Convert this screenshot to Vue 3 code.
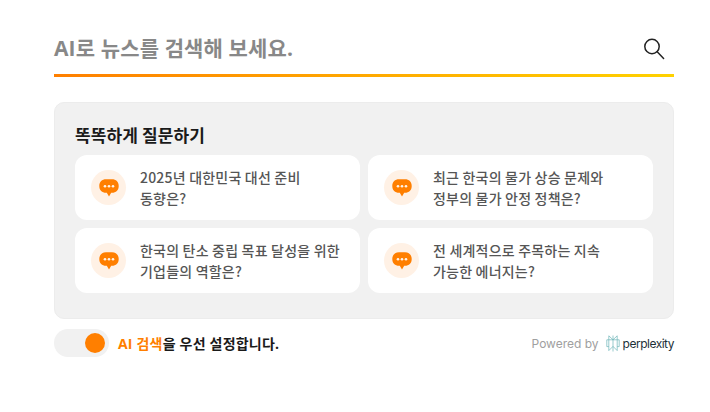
<script setup>
const questions = [
  ['2025년 대한민국 대선 준비', '동향은?'],
  ['최근 한국의 물가 상승 문제와', '정부의 물가 안정 정책은?'],
  ['한국의 탄소 중립 목표 달성을 위한', '기업들의 역할은?'],
  ['전 세계적으로 주목하는 지속', '가능한 에너지는?'],
]
</script>

<template>
  <main class="page">
    <div class="search">
      <span class="placeholder">AI로 뉴스를 검색해 보세요.</span>
      <svg class="search-icon" width="24" height="24" viewBox="0 0 24 24" fill="none" stroke="#222" stroke-width="1.5">
        <circle cx="10" cy="9.5" r="7.2" />
        <path d="M15.2 14.8 L21.6 21.4" stroke-linecap="round" />
      </svg>
    </div>
    <section class="panel">
      <h2 class="title">똑똑하게 질문하기</h2>
      <div class="grid">
        <button v-for="(q, i) in questions" :key="i" class="card">
          <span class="badge">
            <svg width="20" height="19" viewBox="0 0 20 19">
              <path d="M7 0.3 H13 C17 0.3 19.7 2.8 19.7 7 C19.7 11.4 17 13.8 13 13.8 H12.2 L10 17.6 L7.8 13.8 H7 C3 13.8 0.3 11.4 0.3 7 C0.3 2.8 3 0.3 7 0.3 Z" fill="#ff7f00" />
              <circle cx="6" cy="7.2" r="1.3" fill="#fff3e8" />
              <circle cx="10" cy="7.2" r="1.3" fill="#fff3e8" />
              <circle cx="14" cy="7.2" r="1.3" fill="#fff3e8" />
            </svg>
          </span>
          <span class="q">{{ q[0] }}<br />{{ q[1] }}</span>
        </button>
      </div>
    </section>
    <footer class="foot">
      <div class="toggle-row">
        <span class="toggle"><span class="knob"></span></span>
        <span class="label"><em>AI 검색</em>을 우선 설정합니다.</span>
      </div>
      <div class="powered">
        <span class="by">Powered by</span>
        <svg width="14" height="17" viewBox="0 0 14 17" fill="none" stroke="#6db5b7" stroke-width="0.7">
          <path d="M7 0.5 V16.5 M0.8 4.8 V11.6 L2.8 11.6 M13.2 4.8 V11.6 L11.2 11.6 M0.8 4.8 H13.2 M7 4.8 L2.8 0.8 V4.8 M7 4.8 L11.2 0.8 V4.8 M2.8 4.8 V15.6 L7 11.4 L11.2 15.6 V4.8" />
        </svg>
        <span class="logo">perplexity</span>
      </div>
    </footer>
  </main>
</template>

<style scoped>
.page {
  width: 620px;
  margin-left: 54px;
  padding-top: 20px;
  font-family: "Noto Sans CJK KR", "Noto Sans", sans-serif;
  box-sizing: border-box;
}
.search {
  height: 54px;
  border-bottom: 3px solid transparent;
  border-image: linear-gradient(90deg, #ff7f00, #ffd200) 1;
  display: flex;
  align-items: center;
  justify-content: space-between;
  box-sizing: content-box;
}
.placeholder {
  font-family: "Open Sans", "Noto Sans CJK KR", sans-serif;
  font-size: 21px;
  font-weight: 700;
  letter-spacing: 0.13px;
  color: #888;
}
.search-icon {
  margin-right: 8px;
  position: relative;
  top: 2px;
}
.panel {
  margin-top: 25px;
  height: 217px;
  box-sizing: border-box;
  background: #f1f1f1;
  border: 1px solid #ececec;
  border-radius: 10px;
  padding: 20px;
}
.title {
  margin: 0;
  font-size: 17px;
  line-height: 26px;
  font-weight: 700;
  letter-spacing: 0.1px;
  color: #1a1a1a;
  position: relative;
  top: -1px;
}
.grid {
  margin-top: 6px;
  display: grid;
  grid-template-columns: 285px 285px;
  grid-auto-rows: 65px;
  gap: 8px;
}
.card {
  display: flex;
  align-items: center;
  gap: 14px;
  padding: 0 16px;
  border: 0;
  border-radius: 12px;
  background: #fff;
  text-align: left;
  font: inherit;
}
.badge {
  flex: none;
  width: 35px;
  height: 35px;
  border-radius: 50%;
  background: #fff1e5;
  display: flex;
  align-items: center;
  justify-content: center;
}
.badge svg {
  position: relative;
  top: 1px;
}
.q {
  font-size: 14px;
  line-height: 21px;
  letter-spacing: 0.2px;
  font-weight: 500;
  color: #555;
}
.foot {
  margin-top: 10px;
  height: 28px;
  display: flex;
  justify-content: space-between;
  align-items: center;
}
.toggle-row {
  display: flex;
  align-items: center;
  gap: 9px;
}
.toggle {
  width: 55px;
  height: 28px;
  border-radius: 14px;
  background: #f1f1f1;
  display: flex;
  align-items: center;
  justify-content: flex-end;
  padding-right: 4px;
  box-sizing: border-box;
}
.knob {
  width: 20px;
  height: 20px;
  border-radius: 50%;
  background: #ff7f00;
}
.label {
  font-family: "Open Sans", "Noto Sans CJK KR", sans-serif;
  font-size: 14px;
  font-weight: 700;
  letter-spacing: 0.2px;
  color: #1a1a1a;
}
.label em {
  font-style: normal;
  color: #ff7f00;
}
.powered {
  display: flex;
  align-items: center;
}
.by {
  font-family: "Inter", sans-serif;
  font-size: 12px;
  color: #a0a0a0;
  margin-right: 7px;
}
.logo {
  font-family: "Inter", sans-serif;
  font-size: 12px;
  letter-spacing: -0.5px;
  color: #1d3138;
  margin-left: 3px;
}
</style>
